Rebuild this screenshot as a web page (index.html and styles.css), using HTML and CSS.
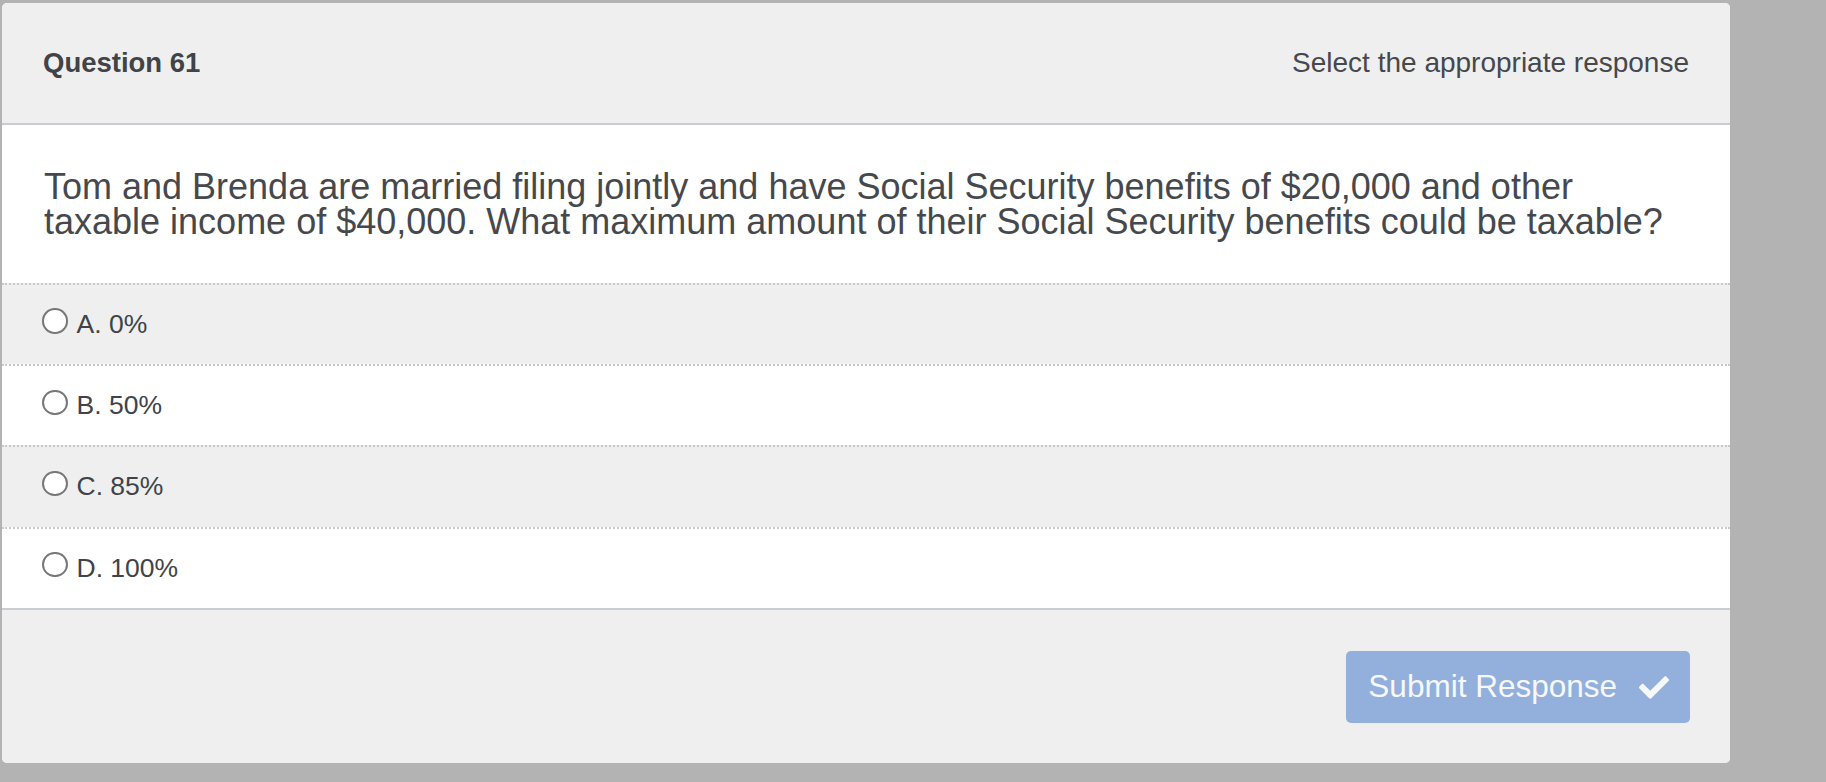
FILE: index.html
```html
<!DOCTYPE html>
<html lang="en">
<head>
<meta charset="utf-8">
<title>Question 61</title>
<link rel="stylesheet" href="styles.css">
</head>
<body>
<div class="panel">
  <div class="panel-header">
    <div class="q-number">Question 61</div>
    <div class="q-hint">Select the appropriate response</div>
  </div>
  <div class="q-body">
    Tom and Brenda are married filing jointly and have Social Security benefits of $20,000 and other taxable income of $40,000. What maximum amount of their Social Security benefits could be taxable?
  </div>
  <div class="options">
    <label class="option alt"><input type="radio" name="ans" class="radio"><span>A. 0%</span></label>
    <label class="option"><input type="radio" name="ans" class="radio"><span>B. 50%</span></label>
    <label class="option alt"><input type="radio" name="ans" class="radio"><span>C. 85%</span></label>
    <label class="option"><input type="radio" name="ans" class="radio"><span>D. 100%</span></label>
  </div>
  <div class="panel-footer">
    <button class="submit" type="button">
      <span>Submit Response</span>
      <svg class="check" viewBox="0 65 512 382" width="30" height="23" aria-hidden="true"><path d="M173.898 439.404l-166.4-166.4c-9.997-9.997-9.997-26.206 0-36.204l36.203-36.204c9.997-9.998 26.207-9.998 36.204 0L192 312.69 432.095 72.596c9.997-9.997 26.207-9.997 36.204 0l36.203 36.204c9.997 9.997 9.997 26.206 0 36.204l-294.4 294.401c-9.998 9.997-26.207 9.997-36.204-.001z"/></svg>
    </button>
  </div>
</div>
</body>
</html>
```
FILE: styles.css
```css
html, body {
  margin: 0;
  padding: 0;
}
body {
  background: #b3b3b3;
  font-family: "Liberation Sans", Arial, Helvetica, sans-serif;
  color: #424548;
  height: 782px;
  overflow: hidden;
}
.panel {
  margin: 3px 0 0 2px;
  width: 1728px;
  background: #ffffff;
  border-radius: 5px;
  overflow: hidden;
}
.panel-header {
  height: 120px;
  background: #efefef;
  border-bottom: 2px solid #c9ccd0;
  display: flex;
  align-items: center;
  justify-content: space-between;
  padding: 0 41px;
  box-sizing: content-box;
}
.q-number {
  font-weight: bold;
  font-size: 27.5px;
  color: #404347;
}
.q-hint {
  font-size: 28px;
  color: #45484c;
}
.q-body {
  padding: 44px 41px 44px 42px;
  font-size: 36px;
  line-height: 35px;
  color: #45484c;
  background: #ffffff;
}
.options {
  display: flex;
  flex-direction: column;
}
.option {
  height: 79.2px;
  border-top: 2px dotted #c9c9c9;
  display: flex;
  align-items: center;
  padding-left: 40px;
  font-size: 26.5px;
  color: #404347;
  background: #ffffff;
}
.option.alt {
  background: #efefef;
}
.radio {
  -webkit-appearance: none;
  appearance: none;
  width: 25.5px;
  height: 25.5px;
  margin: 0 9px 7px 0;
  box-sizing: border-box;
  border: 2px solid #777777;
  border-radius: 50%;
  background: #ffffff;
  flex: none;
}
.panel-footer {
  border-top: 2px solid #c9ccd0;
  background: #efefef;
  height: 155px;
  display: flex;
  justify-content: flex-end;
  align-items: flex-start;
  padding: 41px 40px 0 0;
  box-sizing: border-box;
}
.submit {
  height: 72px;
  padding: 0 21px 0 22px;
  border: none;
  border-radius: 5px;
  background: #93b0dc;
  color: #f7f8fa;
  font-family: "Liberation Sans", Arial, Helvetica, sans-serif;
  font-size: 31.5px;
  display: flex;
  align-items: center;
  gap: 22px;
}
.check {
  fill: #f7f8fa;
  margin-top: 2px;
}
```
